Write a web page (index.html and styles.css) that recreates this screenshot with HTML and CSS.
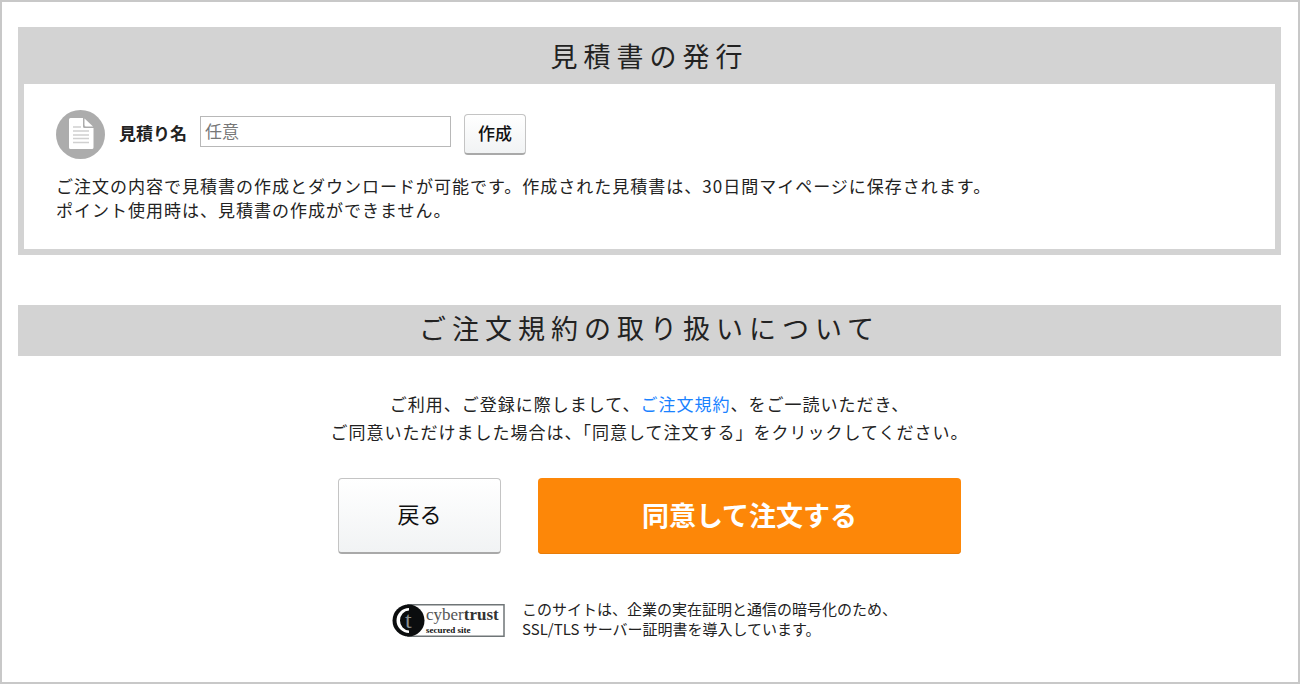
FILE: index.html
```
<!DOCTYPE html>
<html lang="ja">
<head>
  <meta charset="UTF-8" />
  <title>ご注文内容の確認</title>
  <link rel="stylesheet" href="styles.css">
</head>
<body>
  <!-- 見積書 -->
  <section class="estimate">
    <h2 class="heading">見積書の発行</h2>
    <div class="estimate-body">
      <form class="estimate-form">
        <svg class="estimate-icon" viewBox="0 0 49 49" aria-hidden="true">
          <circle cx="24.5" cy="24.5" r="24.5" fill="#acacac" />
          <path d="M14.5 8H27v8.5q0 1.500 1.500 1.500h9v19.500a1.500 1.500 0 0 1-1.500 1.500H14.500A1.500 1.500 0 0 1 13 37.500v-28A1.500 1.500 0 0 1 14.500 8z" fill="#fff" />
          <path d="M28.500 8.500V15q0 1.500 1.500 1.500h7z" fill="#fff" />
          <path d="M17 17h8M17 21h16M17 25h16M17 28.500h16M17 32.500h16" stroke="#d0d0d0" stroke-width="1.500" />
        </svg>
        <label for="estimateName">見積り名</label>
        <input type="text" id="estimateName" placeholder="任意" />
        <button type="button" class="btn btn-small">作成</button>
      </form>
      <p class="estimate-note">ご注文の内容で見積書の作成とダウンロードが可能です。作成された見積書は、30日間マイページに保存されます。<br>ポイント使用時は、見積書の作成ができません。</p>
    </div>
  </section>

  <!-- 注文規約 -->
  <section class="terms">
    <h2 class="heading">ご注文規約の取り扱いについて</h2>
    <p class="terms-text">ご利用、ご登録に際しまして、<a href="#">ご注文規約</a>、をご一読いただき、<br>ご同意いただけました場合は、「同意して注文する」をクリックしてください。</p>
    <div class="actions">
      <button type="button" class="btn btn-back">戻る</button>
      <button type="button" class="btn btn-order">同意して注文する</button>
    </div>
    <div class="trust">
      <svg class="trust-logo" viewBox="0 0 113 33" role="img" aria-label="cybertrust secured site">
        <rect x="16" y="0.750" width="96" height="31.500" fill="#fff" stroke="#6f7577" stroke-width="1.500" />
        <circle cx="16.500" cy="16.500" r="16" fill="#0b0d0e" />
        <path d="M17 4A12.500 12.500 0 0 0 17 29L17 26.500A9 10 0 0 1 17 6.500z" fill="#fff" />
        <text x="13" y="24" class="logo-t">t</text>
        <text x="34" y="16" class="logo-name">cyber<tspan class="logo-bold">trust</tspan></text>
        <text x="34" y="29" class="logo-sub">secured site</text>
      </svg>
      <p class="trust-text">このサイトは、企業の実在証明と通信の暗号化のため、<br>SSL/TLS サーバー証明書を導入しています。</p>
    </div>
  </section>
</body>
</html>
```

FILE: styles.css
```
* {
  box-sizing: border-box;
}
body {
  margin: 0;
  min-height: 100vh;
  padding: 25px 17px 24px 16px;
  border: 2px solid #c8c8c8;
  background: #fff;
  color: #222;
  font-family: "Noto Sans CJK JP", sans-serif;
  font-size: 17px;
}
p {
  margin: 0;
}
a {
  color: #1a82ff;
  text-decoration: none;
}
/* 見出し */
.heading {
  margin: 0;
  padding-bottom: 5px;
  background: #d3d3d3;
  font-size: 27px;
  font-weight: normal;
  line-height: 46px;
  letter-spacing: 6px;
  text-align: center;
}
/* 見積書 */
.estimate {
  border: 6px solid #d3d3d3;
}
.estimate-body {
  padding: 26px 32px 27px;
}
.estimate-form {
  display: flex;
  align-items: center;
}
.estimate-form label {
  margin: 0 13px 0 14px;
  padding-bottom: 4px;
  font-weight: bold;
}
.estimate-form input {
  width: 251px;
  height: 31px;
  margin: 0 13px 6px 0;
  padding: 0 4px 2px;
  border: 1px solid #b8b8b8;
  font-family: inherit;
  font-size: 17px;
}
.estimate-form input::placeholder {
  color: #777;
}
.estimate-icon {
  width: 49px;
  height: 49px;
}
.estimate-note {
  margin-top: 15px;
  line-height: 24px;
  letter-spacing: 1px;
}
/* ボタン */
.btn {
  padding: 0 0 4px;
  border: 1px solid #c4c4c4;
  border-bottom: 2px solid #a9a9a9;
  border-radius: 4px;
  background: linear-gradient(#fff, #f1f3f4);
  color: #111;
  font-family: inherit;
  cursor: pointer;
}
.btn-small {
  width: 62px;
  height: 41px;
  font-size: 17px;
  font-weight: 500;
}
.btn-back {
  width: 163px;
  height: 76px;
  padding-bottom: 6px;
  font-size: 22px;
}
.btn-order {
  width: 423px;
  height: 76px;
  border: none;
  background: #fd8708;
  box-shadow: inset 0 -1px #e87c08;
  color: #fff;
  font-size: 27px;
  font-weight: bold;
}
/* 注文規約 */
.terms {
  margin-top: 50px;
}
.terms-text {
  margin-top: 34px;
  line-height: 28px;
  letter-spacing: 1px;
  text-align: center;
}
.actions {
  display: flex;
  justify-content: center;
  gap: 37px;
  margin-top: 32px;
}
/* サイト証明 */
.trust {
  display: flex;
  justify-content: center;
  align-items: center;
  gap: 17px;
  margin-top: 45px;
  padding-right: 10px;
}
.trust-logo {
  width: 113px;
  height: 33px;
}
.trust-text {
  padding-bottom: 2px;
  font-size: 15px;
  line-height: 20px;
}
.logo-t {
  fill: #8a8f91;
  font: 24px "Liberation Serif", serif;
}
.logo-name {
  fill: #555;
  font: 17px "Liberation Serif", serif;
}
.logo-bold {
  fill: #333;
  font-weight: bold;
}
.logo-sub {
  fill: #111;
  font: bold 9px "Liberation Serif", serif;
}
```
